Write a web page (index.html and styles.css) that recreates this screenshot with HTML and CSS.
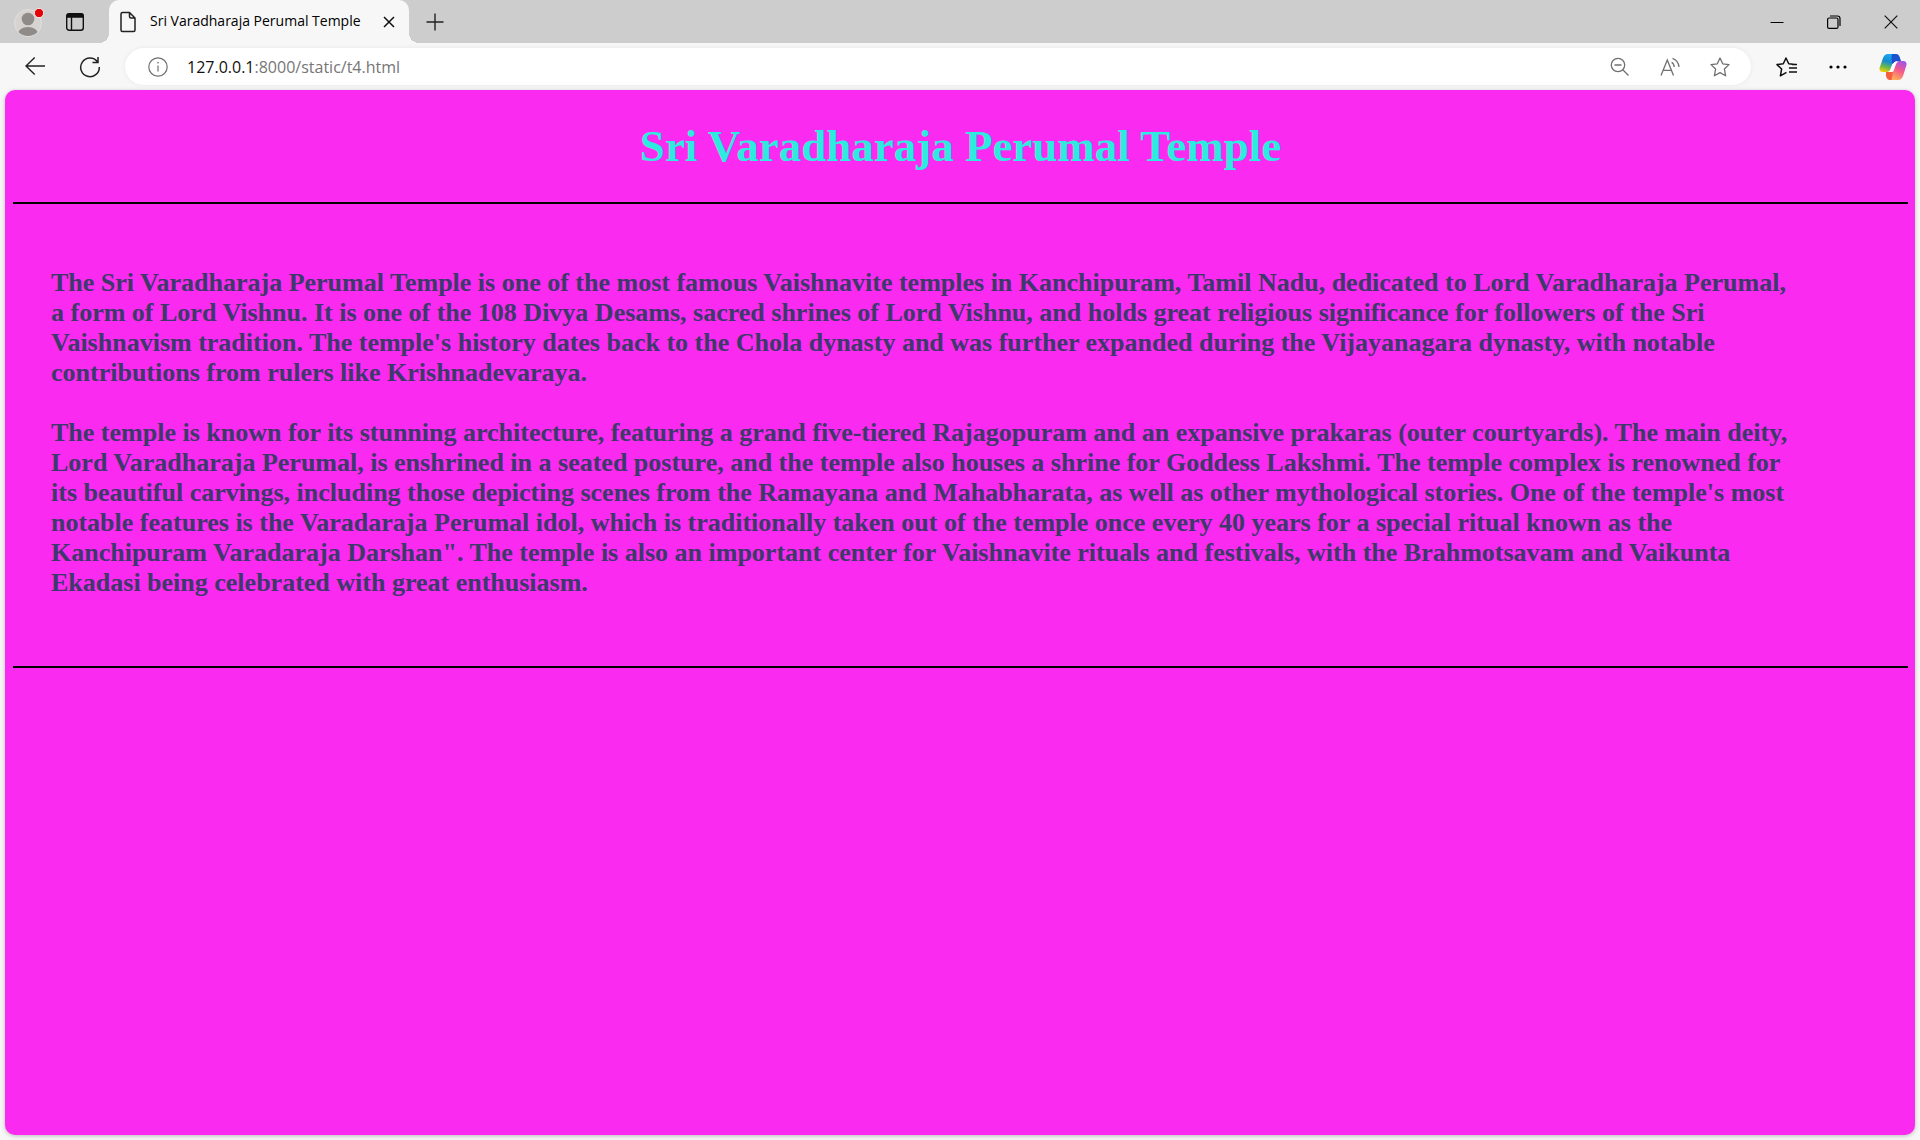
FILE: index.html
```html
<!DOCTYPE html>
<html lang="en">
<head>
<meta charset="utf-8">
<title>Sri Varadharaja Perumal Temple</title>
<link rel="stylesheet" href="styles.css">
</head>
<body>
<div class="browser">
  <header class="tabstrip">
    <div class="tools">
      <button class="btn" aria-label="Profile">
        <svg width="32" height="32" viewBox="0 0 32 32"><defs><clipPath id="av"><circle cx="16" cy="17" r="13"/></clipPath></defs><circle cx="16" cy="17" r="13.5" fill="#d6d3d0" stroke="#e2dfdc"/><circle cx="16" cy="13" r="6.3" fill="#8f8b88"/><ellipse cx="16" cy="29" rx="10.5" ry="8" fill="#8f8b88" clip-path="url(#av)"/><circle cx="27" cy="7" r="4.7" fill="#e60008" stroke="#f3f3f3"/></svg>
      </button>
      <button class="btn" aria-label="Tab actions">
        <svg width="18" height="18" viewBox="1 1 18 18" fill="none" stroke="#111" stroke-width="1.4"><rect x="1.7" y="1.7" width="16.6" height="16.6" rx="2.5"/><path d="M2 5V3.5Q2 2 3.500 2h13Q18 2 18 3.500V5z" fill="#111"/><path d="M6.500 5v13"/></svg>
      </button>
    </div>
    <div class="tab">
      <svg width="16" height="22" viewBox="0 0 16 22" fill="none" stroke="#222" stroke-width="1.5" stroke-linejoin="round"><path d="M1 3Q1 1.500 2.500 1.500H9.500L15 7V19Q15 20.500 13.500 20.500H2.500Q1 20.500 1 19zM9.500 1.500V5.500Q9.500 7 11 7H15"/></svg>
      <span class="tab-title">Sri Varadharaja Perumal Temple</span>
      <button class="btn" aria-label="Close tab"><svg width="12" height="12" viewBox="0 0 12 12" stroke="#111" stroke-width="1.5"><path d="M1 1l10 10M11 1L1 11"/></svg></button>
    </div>
    <button class="btn newtab" aria-label="New tab"><svg width="18" height="18" viewBox="0 0 18 18" stroke="#222" stroke-width="1.400"><path d="M9 .5v17M.5 9h17"/></svg></button>
    <div class="window-controls">
      <button class="btn" aria-label="Minimize"><svg width="14" height="14" viewBox="0 0 14 14" stroke="#000"><path d="M.5 7.500h13"/></svg></button>
      <button class="btn" aria-label="Restore"><svg width="14" height="14" viewBox="0 0 14 14" fill="none" stroke="#000" stroke-width="1.200"><rect x=".6" y="3" width="10.400" height="10.400" rx="1.500"/><path d="M3 1h7.500Q13 1 13 3.500V11"/></svg></button>
      <button class="btn" aria-label="Close"><svg width="14" height="14" viewBox="0 0 14 14" stroke="#111" stroke-width="1.200"><path d="M.7 .7l12.600 12.600M13.300 .7L.7 13.300"/></svg></button>
    </div>
  </header>
  <nav class="toolbar" aria-label="Navigation">
    <button class="btn" aria-label="Back"><svg width="20" height="20" viewBox="0 0 20 20" fill="none" stroke="#222" stroke-width="1.400"><path d="M20 9H1M9.700 .5L1 9l8.700 8.500"/></svg></button>
    <button class="btn reload" aria-label="Reload"><svg width="22" height="22" viewBox="0 0 22 22" fill="none" stroke="#222" stroke-width="1.500"><path d="M18.400 5.700A9.300 9.300 0 1 0 20.300 11M19 1v5.500h-5.500"/></svg></button>
    <div class="address">
      <svg width="20" height="20" viewBox="0 0 20 20" fill="none" stroke="#707070" stroke-width="1.200"><circle cx="10" cy="10" r="9.200"/><path d="M10 8.500v6"/><circle cx="10" cy="5.700" r=".6" fill="#707070" stroke-width=".5"/></svg>
      <a class="url" href="#"><span class="host">127.0.0.1</span>:8000/static/t4.html</a>
      <div class="address-actions">
        <button class="btn" aria-label="Zoom out"><svg width="20" height="20" viewBox="0 0 20 20" fill="none" stroke="#707070" stroke-width="1.300"><circle cx="8" cy="8" r="6.700"/><path d="M4.500 8h7M12.800 12.800l5.700 5.700"/></svg></button>
        <button class="btn" aria-label="Read aloud"><svg width="20" height="20" viewBox="0 0 20 20" fill="none" stroke="#707070" stroke-width="1.300"><path d="M1 18.500L7.300 3l6.200 15.500M3.200 13.300h8.200M11.600 5.300Q14 6.500 14.200 10M12.500 1.300Q18.500 3.500 19 10"/></svg></button>
        <button class="btn" aria-label="Add to favorites"><svg width="20" height="20" viewBox="0 0 20 20" fill="none" stroke="#707070" stroke-width="1.300" stroke-linejoin="round"><path d="M10 1l2.700 5.800 6.300.8-4.600 4.400 1.200 6.800L10 15.600 4.400 18.800 5.600 12 1 7.600l6.300-.8z"/></svg></button>
      </div>
    </div>
    <div class="toolbar-actions">
      <button class="btn" aria-label="Favorites"><svg width="21" height="20" viewBox="0 0 21 20" fill="none" stroke="#111" stroke-width="1.500" stroke-linejoin="round"><path d="M19 7.400l-6.300-.6L10 1 7.300 6.800 1 7.600 5.600 12 4.400 18.800 10.500 15.400M13 11h8M13 15h8M16 7.400h5"/></svg></button>
      <button class="btn" aria-label="More"><svg width="18" height="20" viewBox="0 0 18 20"><circle cx="2" cy="10" r="1.600"/><circle cx="9" cy="10" r="1.600"/><circle cx="16" cy="10" r="1.600"/></svg></button>
      <button class="btn" aria-label="Copilot"><svg width="28" height="28" viewBox="0 0 28 28"><defs><linearGradient id="ca" x1=".5" y1="0" x2=".2" y2="1"><stop offset="0" stop-color="#1ba5f4"/><stop offset=".4" stop-color="#168cd0"/><stop offset=".7" stop-color="#69b94f"/><stop offset="1" stop-color="#ffd000"/></linearGradient><linearGradient id="cb" x1=".8" y1="0" x2=".4" y2="1"><stop offset="0" stop-color="#9a55ed"/><stop offset=".5" stop-color="#f4588c"/><stop offset="1" stop-color="#ffab5c"/></linearGradient></defs><path d="M9 1h9L14 9l-3 8q-1 2-3 2H4Q0 19 .5 15L4 5Q5.500 1 9 1z" fill="url(#ca)"/><path d="M13 1h4q3 0 4 4l1 3h-4q-2 0-3 2l-2 1q-1-8 0-10z" fill="#1d50cf"/><path d="M19 27h-8l3-8 3-9q1-2 3-2h4q4 0 3.500 4L24 23q-1.500 4-5 4z" fill="url(#cb)"/><path d="M7 19h5q1.500 0 2.500-2l-2 10H11q-3 0-4-4z" fill="#f4603c"/><path d="M15.500 9H19q-1 0-2 2l-2.500 7q-.5 1-2 1H9q2 0 3-3l2-5z" fill="#fff"/></svg></button>
    </div>
  </nav>
  <main class="page">
    <h1 class="title">Sri Varadharaja Perumal Temple</h1>
    <hr class="rule">
    <article class="story">
      <p>The Sri Varadharaja Perumal Temple is one of the most famous Vaishnavite temples in Kanchipuram, Tamil Nadu, dedicated to Lord Varadharaja Perumal, a form of Lord Vishnu. It is one of the 108 Divya Desams, sacred shrines of Lord Vishnu, and holds great religious significance for followers of the Sri Vaishnavism tradition. The temple's history dates back to the Chola dynasty and was further expanded during the Vijayanagara dynasty, with notable contributions from rulers like Krishnadevaraya.</p>
      <p>The temple is known for its stunning architecture, featuring a grand five-tiered Rajagopuram and an expansive prakaras (outer courtyards). The main deity, Lord Varadharaja Perumal, is enshrined in a seated posture, and the temple also houses a shrine for Goddess Lakshmi. The temple complex is renowned for its beautiful carvings, including those depicting scenes from the Ramayana and Mahabharata, as well as other mythological stories. One of the temple's most notable features is the Varadaraja Perumal idol, which is traditionally taken out of the temple once every 40 years for a special ritual known as the Kanchipuram Varadaraja Darshan". The temple is also an important center for Vaishnavite rituals and festivals, with the Brahmotsavam and Vaikunta Ekadasi being celebrated with great enthusiasm.</p>
    </article>
    <hr class="rule">
  </main>
</div>
</body>
</html>
```
FILE: styles.css
```css
* { box-sizing: border-box; }
body {
  margin: 0;
  background: #f7f7f7;
  font-family: "Open Sans", "Noto Sans", sans-serif;
}
.browser {
  display: flex;
  flex-direction: column;
  min-height: 100vh;
}
.btn {
  display: flex;
  padding: 0;
  border: 0;
  background: none;
}
.tabstrip {
  display: flex;
  align-items: center;
  height: 43px;
  background: #cdcdcd;
}
.tools {
  display: flex;
  align-items: center;
  gap: 22px;
  width: 109px;
  padding-left: 12px;
}
.tab {
  position: relative;
  display: flex;
  align-items: center;
  width: 300px;
  height: 43px;
  padding: 0 14px 0 11px;
  background: #f7f7f7;
  border-radius: 10px 10px 0 0;
}
.tab::before,
.tab::after {
  content: "";
  position: absolute;
  bottom: 0;
  width: 10px;
  height: 10px;
}
.tab::before {
  right: 100%;
  background: radial-gradient(circle at 0 0, #cdcdcd 10px, #f7f7f7 10px);
}
.tab::after {
  left: 100%;
  background: radial-gradient(circle at 100% 0, #cdcdcd 10px, #f7f7f7 10px);
}
.tab-title {
  flex: 1;
  margin-left: 14px;
  padding-bottom: 2px;
  font-size: 14px;
  line-height: 20px;
  white-space: nowrap;
}
.newtab { margin-left: 17px; }
.window-controls {
  display: flex;
  gap: 43px;
  margin-left: auto;
  padding-right: 22px;
}
.toolbar {
  display: flex;
  align-items: center;
  height: 47px;
  padding: 0 13px 0 25px;
}
.reload { margin: 0 24px 0 34px; }
.address {
  display: flex;
  flex: 1;
  align-items: center;
  height: 37px;
  padding: 0 21px 0 23px;
  background: #fff;
  border-radius: 19px;
  box-shadow: 0 0 4px #e6e6e6;
}
.url {
  margin-left: 19px;
  color: #767676;
  font-size: 16px;
  line-height: 24px;
  text-decoration: none;
}
.host { color: #111; }
.address-actions {
  display: flex;
  gap: 30px;
  margin-left: auto;
}
.toolbar-actions {
  display: flex;
  align-items: center;
  gap: 32px;
  padding-left: 25px;
}
.page {
  flex: 1;
  margin: 0 5px 5px;
  padding: 28px 7px 8px 8px;
  background: #fa2af0;
  border-radius: 10px;
  box-shadow: 0 1px 4px #bbb;
  font-family: "Liberation Serif", serif;
  font-weight: bold;
}
.title {
  margin: 0 0 28px;
  color: #2eebe0;
  font-size: 45px;
  line-height: 56px;
  text-align: center;
}
.rule {
  margin: 0;
  border: 0;
  border-top: 2px solid #000;
}
.story {
  padding: 64px 112px 68px 38px;
  color: #3d3a6b;
  font-size: 26px;
  line-height: 30px;
}
.story p { margin: 0 0 30px; }
.story p:last-child { margin-bottom: 0; }
```
